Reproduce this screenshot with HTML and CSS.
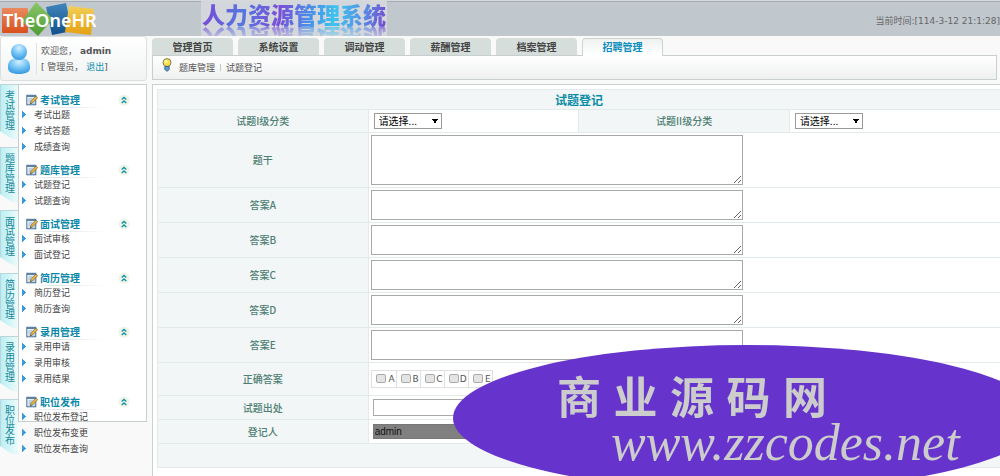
FILE: index.html
```html
<!DOCTYPE html>
<html lang="zh-CN">
<head>
<meta charset="utf-8">
<title>人力资源管理系统</title>
<link rel="stylesheet" href="styles.css">
</head>
<body>
<svg class="defs" aria-hidden="true">
  <defs>
    <linearGradient id="paper" x1="0" y1="0" x2="1" y2="1"><stop offset="0" stop-color="#fff"/><stop offset="1" stop-color="#a9cdee"/></linearGradient>
    <symbol id="edit" viewBox="0 0 12 12">
      <rect x=".8" y="1.3" width="9" height="9.5" fill="url(#paper)" stroke="#4a7094"/>
      <path d="M1 2.2h8.6" stroke="#51779a" stroke-width="1.4"/>
      <path d="M2.5 5h4M2.5 7h2.5" stroke="#86a9c9" stroke-width=".8"/>
      <path d="M4.3 9.8l.8-2.7 5-5 1.6 1.6-4.9 5z" fill="#efb63c" stroke="#6b562d" stroke-width=".6"/>
      <path d="M4.3 9.8l.4-1.4 1 1z" fill="#222"/>
    </symbol>
    <symbol id="fold" viewBox="0 0 12 12">
      <circle cx="6" cy="6" r="5.6" fill="#eef5e6"/>
      <path d="M3.7 5.6L6 3.5l2.3 2.1M3.7 9L6 6.9 8.3 9" fill="none" stroke="#118fa8" stroke-width="1.3"/>
    </symbol>
  </defs>
</svg>

<header class="top">
  <svg class="logo" viewBox="0 0 96 36" role="img" aria-label="TheOneHR">
    <defs>
      <linearGradient id="lr" x1="0" y1="0" x2="0" y2="1"><stop offset="0" stop-color="#e98a5f"/><stop offset="1" stop-color="#d9501c"/></linearGradient>
      <linearGradient id="ly" x1="0" y1="0" x2="0" y2="1"><stop offset="0" stop-color="#f2cf56"/><stop offset="1" stop-color="#e5a012"/></linearGradient>
      <linearGradient id="lg" x1="0" y1="0" x2="0" y2="1"><stop offset="0" stop-color="#8cc66a"/><stop offset="1" stop-color="#4d9c33"/></linearGradient>
      <linearGradient id="lb" x1="0" y1="0" x2="0" y2="1"><stop offset="0" stop-color="#3f86bb"/><stop offset="1" stop-color="#12508c"/></linearGradient>
    </defs>
    <rect x="2" y="7" width="26" height="25" rx="1" fill="url(#lr)"/>
    <path d="M46 6l20-4 6 28-20 4z" fill="url(#lb)"/>
    <path d="M36 1l17 17-15 17-16-15z" fill="url(#lg)"/>
    <path d="M69 5l25 3-3 26-26-3z" fill="url(#ly)"/>
    <text class="logo-text" x="3" y="26">TheOneHR</text>
  </svg>
  <h1 class="banner"><span class="banner-text">人力资源管理系统</span></h1>
  <p class="clock">当前时间:[114-3-12 21:1:28]</p>
</header>

<div class="page">
  <aside class="side">
    <section class="user">
      <svg class="avatar" viewBox="0 0 26 34" aria-hidden="true">
        <defs><radialGradient id="av" cx=".5" cy=".25" r=".8"><stop offset="0" stop-color="#d5f0ff"/><stop offset=".5" stop-color="#72c3f4"/><stop offset="1" stop-color="#2f92dc"/></radialGradient></defs>
        <path d="M2 24c0-6 5-8 11-8s11 2 11 8c1 6-4 8-11 8S1 30 2 24z" fill="url(#av)"/>
        <circle cx="13" cy="10" r="8" fill="url(#av)"/>
      </svg>
      <div class="user-info">
        <p>欢迎您， <b>admin</b></p>
        <p>[ 管理员， <a href="#">退出</a>]</p>
      </div>
    </section>
    <div class="nav">
      <div class="vtabs">
        <button class="vtab">考试管理</button>
        <button class="vtab">题库管理</button>
        <button class="vtab">面试管理</button>
        <button class="vtab">简历管理</button>
        <button class="vtab">录用管理</button>
        <button class="vtab">职位发布</button>
      </div>
      <nav class="menu">
        <section class="group">
          <h2><svg><use href="#edit"/></svg><span>考试管理</span><svg><use href="#fold"/></svg></h2>
          <ul><li><a href="#">考试出题</a></li><li><a href="#">考试答题</a></li><li><a href="#">成绩查询</a></li></ul>
        </section>
        <section class="group">
          <h2><svg><use href="#edit"/></svg><span>题库管理</span><svg><use href="#fold"/></svg></h2>
          <ul><li><a href="#">试题登记</a></li><li><a href="#">试题查询</a></li></ul>
        </section>
        <section class="group">
          <h2><svg><use href="#edit"/></svg><span>面试管理</span><svg><use href="#fold"/></svg></h2>
          <ul><li><a href="#">面试审核</a></li><li><a href="#">面试登记</a></li></ul>
        </section>
        <section class="group">
          <h2><svg><use href="#edit"/></svg><span>简历管理</span><svg><use href="#fold"/></svg></h2>
          <ul><li><a href="#">简历登记</a></li><li><a href="#">简历查询</a></li></ul>
        </section>
        <section class="group">
          <h2><svg><use href="#edit"/></svg><span>录用管理</span><svg><use href="#fold"/></svg></h2>
          <ul><li><a href="#">录用申请</a></li><li><a href="#">录用审核</a></li><li><a href="#">录用结果</a></li></ul>
        </section>
        <section class="group">
          <h2><svg><use href="#edit"/></svg><span>职位发布</span><svg><use href="#fold"/></svg></h2>
          <ul><li><a href="#">职位发布登记</a></li><li><a href="#">职位发布变更</a></li><li><a href="#">职位发布查询</a></li></ul>
        </section>
      </nav>
    </div>
  </aside>

  <main class="main">
    <nav class="tabs">
      <a class="tab" href="#">管理首页</a>
      <a class="tab" href="#">系统设置</a>
      <a class="tab" href="#">调动管理</a>
      <a class="tab" href="#">薪酬管理</a>
      <a class="tab" href="#">档案管理</a>
      <a class="tab active" href="#">招聘管理</a>
    </nav>
    <div class="crumbs">
      <svg class="bulb" viewBox="0 0 10 14" aria-hidden="true">
        <circle cx="5" cy="4.6" r="4" fill="#fbe04a" stroke="#77704a" stroke-width=".9"/>
        <circle cx="4" cy="3.6" r="1.5" fill="#fff9c4"/>
        <path d="M2.8 8.4h4.4v3.2L5 13.3l-2.2-1.7z" fill="#5b9ad0" stroke="#36597c" stroke-width=".8"/>
      </svg>
      <a href="#">题库管理</a><i class="sep"></i><span>试题登记</span>
    </div>
    <form class="panel">
      <table class="form">
        <colgroup><col><col><col><col></colgroup>
        <tbody>
        <tr class="caption"><th colspan="4">试题登记</th></tr>
        <tr class="row-select">
          <th><label for="c1">试题I级分类</label></th>
          <td><select id="c1"><option>请选择...</option></select></td>
          <th><label for="c2">试题II级分类</label></th>
          <td><select id="c2"><option>请选择...</option></select></td>
        </tr>
        <tr><th><label for="stem">题干</label></th><td colspan="3"><textarea id="stem" class="tall"></textarea></td></tr>
        <tr><th><label for="a">答案A</label></th><td colspan="3"><textarea id="a"></textarea></td></tr>
        <tr><th><label for="b">答案B</label></th><td colspan="3"><textarea id="b"></textarea></td></tr>
        <tr><th><label for="c">答案C</label></th><td colspan="3"><textarea id="c"></textarea></td></tr>
        <tr><th><label for="d">答案D</label></th><td colspan="3"><textarea id="d"></textarea></td></tr>
        <tr><th><label for="e">答案E</label></th><td colspan="3"><textarea id="e"></textarea></td></tr>
        <tr class="row-checks"><th>正确答案</th><td colspan="3">
          <div class="checks">
            <label><input type="checkbox">A</label>
            <label><input type="checkbox">B</label>
            <label><input type="checkbox">C</label>
            <label><input type="checkbox">D</label>
            <label><input type="checkbox">E</label>
          </div></td></tr>
        <tr class="row-line"><th><label for="src">试题出处</label></th><td colspan="3"><input id="src" class="field" type="text"></td></tr>
        <tr class="row-line"><th><label for="who">登记人</label></th><td colspan="3"><input id="who" class="field locked" type="text" value="admin" readonly></td></tr>
        <tr class="foot"><th colspan="4"></th></tr>
        </tbody>
      </table>
    </form>
  </main>
</div>

<div class="stamp">
  <p class="stamp-name">商业源码网</p>
  <p class="stamp-url">www.zzcodes.net</p>
</div>
</body>
</html>
```
FILE: styles.css
```css
* { box-sizing: border-box; }
body {
  margin: 0;
  background: #f9f9f9;
  color: #555;
  font: 9px/16px "DejaVu Sans", "Noto Sans CJK SC", sans-serif;
}
h1, h2, p, ul { margin: 0; padding: 0; }
ul { list-style: none; }
a { color: inherit; text-decoration: none; }
.defs { position: absolute; width: 0; height: 0; }

.top {
  display: flex;
  height: 36px;
  background: #c1c8cd;
  border-top: 1px solid #d5d9dc;
  box-shadow: inset 0 1px #a6adb2;
}
.logo { flex: none; width: 96px; height: 36px; }
.logo-text {
  font: 600 18px "Noto Sans", sans-serif;
  fill: #fff;
}
.banner {
  margin-left: 105px;
  padding: 0 1px;
  height: 35px;
  overflow: hidden;
  background: #d3d7dc;
  font: 900 23px/26px "Noto Sans CJK SC", sans-serif;
}
.banner-text {
  display: block;
  color: transparent;
  background: linear-gradient(100deg, #7b45d8 0%, #5577e0 22%, #7a4fd8 42%, #4a8be8 58%, #3cc4ef 72%, #5593e6 86%, #7548d0 100%);
  background-clip: text;
  -webkit-background-clip: text;
  -webkit-box-reflect: below -1px linear-gradient(transparent 40%, rgba(0, 0, 0, .7));
}
.clock {
  margin-left: auto;
  padding-top: 12px;
  color: #666;
  white-space: nowrap;
}

.page { display: flex; gap: 5px; }

.side { width: 147px; flex: none; }
.user {
  display: flex;
  align-items: center;
  height: 45px;
  margin-bottom: 3px;
  padding-left: 5px;
  border: 1px solid #dcdfdf;
  border-radius: 3px;
  background: linear-gradient(#fff, #f1f3f3);
}
.avatar { width: 26px; height: 34px; }
.user-info {
  margin-left: 4px;
  padding-left: 4px;
  border-left: 1px solid #dde2e2;
  white-space: nowrap;
}
.user-info a { color: #0c8eab; }

.nav { display: flex; }
.vtabs {
  display: flex;
  flex-direction: column;
  gap: 7px;
  width: 18px;
}
.vtab {
  height: 56px;
  padding: 0 0 6px;
  border: 0;
  border-left: 1px solid #bcd5da;
  border-top: 1px solid #bcd5da;
  background: linear-gradient(90deg, #b9f0f4, #eefafa);
  clip-path: polygon(0 0, 100% 0, 100% 100%, 60% 97%, 0 84%);
  color: #15879b;
  font: 10px/16px "Noto Sans CJK SC", sans-serif;
  writing-mode: vertical-rl;
}
.menu {
  flex: 1;
  height: 338px;
  padding: 6px 0 0 7px;
  border: 1px solid #c5cfcf;
  background: #fff;
}
.group { padding-bottom: 5px; }
.group h2 {
  display: flex;
  align-items: center;
  gap: 2px;
  height: 17px;
  padding-right: 16px;
  color: #0b88a8;
  font: bold 10px/16px "Noto Sans CJK SC", sans-serif;
  background: linear-gradient(90deg, #fff, #dde3e3 40%, #fff) 0 100% / 80px 1px no-repeat;
}
.group h2 span { flex: 1; }
.group svg { width: 12px; height: 12px; }
.group li {
  height: 16px;
  margin-left: -4px;
  padding-left: 12px;
  color: #444;
  line-height: 14px;
  background: conic-gradient(from 225deg at 100% 50%, #3b9ade 90deg, transparent 0) 0 30% / 4px 7px no-repeat;
}

.main { flex: 1; min-width: 0; padding-top: 2px; }
.tabs { display: flex; gap: 5px; }
.tab {
  width: 81px;
  height: 17px;
  border-radius: 4px 4px 0 0;
  background: #d6dedb;
  color: #444;
  text-align: center;
  font: bold 10px/18px "Noto Sans CJK SC", sans-serif;
}
.tab.active {
  position: relative;
  height: 18px;
  margin-bottom: -1px;
  border: 1px solid #ccd3d3;
  border-bottom: 0;
  background: linear-gradient(#f0f2f2, #fff);
  color: #0b8dbb;
  line-height: 16px;
}
.crumbs {
  display: flex;
  align-items: center;
  height: 25px;
  margin: 0 3px 4px 0;
  padding-left: 9px;
  border: 1px solid #c9cfcf;
  background: linear-gradient(#fff, #eff0f0);
}
.bulb { width: 10px; height: 14px; margin: 0 7px 5px 0; }
.crumbs .sep { width: 1px; height: 7px; margin: 0 5px; background: #c8c8c8; }

.panel {
  min-height: 392px;
  padding: 4px 0 0 4px;
  border: 1px solid #c8d0d0;
  border-width: 1px 0 0 1px;
  background: #fff;
}
.form {
  width: 100%;
  table-layout: fixed;
  border-collapse: collapse;
}
.form th, .form td {
  padding: 2px;
  border: 1px solid #e3eaea;
  border-right: 0;
}
.form th {
  background: #f2f6f6;
  color: #4f7f74;
  font: 500 10px/16px "Noto Sans CJK SC", sans-serif;
}
.form .caption th {
  height: 20px;
  padding: 0;
  color: #0b8da8;
  font-weight: bold;
  font-size: 12px;
}
.row-select { height: 23px; }
.row-checks { height: 33px; }
.row-line, .foot { height: 24px; }
.form select {
  display: block;
  appearance: none;
  width: 68px;
  height: 16px;
  margin-left: 3px;
  padding: 0 4px;
  border: 1px solid #999;
  border-radius: 0;
  background: conic-gradient(from -30deg at 50% 100%, #000 60deg, transparent 0) 57px 5px / 6px 5px no-repeat #fff;
  color: #000;
  font: 10px/14px "Noto Sans CJK SC", sans-serif;
}
.form textarea {
  display: block;
  width: 372px;
  max-width: 100%;
  height: 30px;
  border: 1px solid #a9a9a9;
  background: #fff;
}
.form textarea.tall { height: 50px; }
.checks {
  display: inline-flex;
  vertical-align: top;
  border: 1px solid #e0e0e0;
}
.checks label {
  display: flex;
  align-items: center;
  justify-content: space-between;
  width: 24px;
  height: 16px;
  padding: 0 1px 0 4px;
  line-height: 20px;
}
.checks label + label { border-left: 1px solid #e0e0e0; }
.checks input {
  appearance: none;
  width: 10px;
  height: 9px;
  margin: 0 0 2px;
  border: 1px solid #aaa;
  border-radius: 2px;
  background: #e4e4e4;
}
.field {
  display: block;
  width: 200px;
  height: 17px;
  margin-left: 2px;
  padding: 0 1px;
  border: 1px solid #aaa;
  background: #fff;
  color: #111;
  font: 10px/14px "Liberation Sans", sans-serif;
}
.field.locked { height: 15px; background: #808080; border-color: #777; }

.stamp {
  position: fixed;
  right: -41px;
  bottom: -15px;
  width: 588px;
  height: 146px;
  padding: 24px 0 0 104px;
  border-radius: 50%;
  background: #6633cc;
  color: #ccc;
  pointer-events: none;
}
.stamp-name {
  width: 270px;
  text-align-last: justify;
  font: bold 44px/52px "Noto Sans CJK SC", sans-serif;
}
.stamp-url {
  padding-left: 54px;
  font: italic 52px/44px "Liberation Serif", serif;
}
```
